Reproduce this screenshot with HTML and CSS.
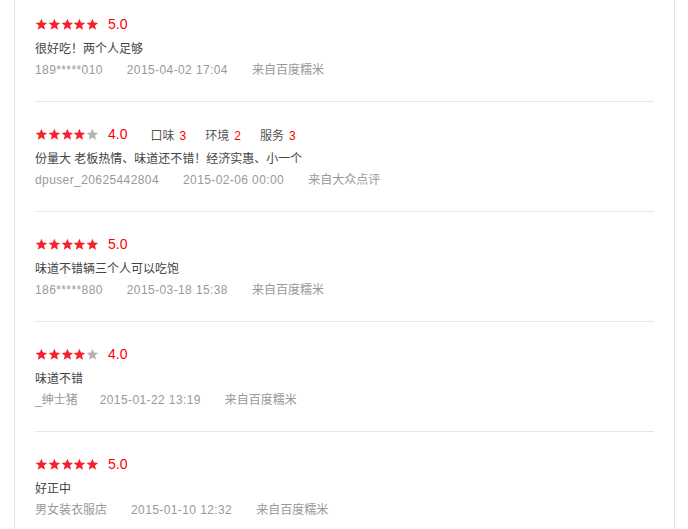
FILE: index.html
```html
<!DOCTYPE html>
<html lang="zh-CN">
<head>
    <meta charset="UTF-8">
    <title>评论列表</title>
    <link rel="stylesheet" href="styles.css">
</head>
<body>
    <svg width="0" height="0" class="defs">
        <defs>
            <path id="star" d="M6.5 0.6 L8.1 4.6 L12.4 4.9 L9.1 7.6 L10.2 11.8 L6.5 9.5 L2.8 11.8 L3.9 7.6 L0.6 4.9 L4.9 4.6 Z"/>
        </defs>
    </svg>

    <div class="review-list">
        <div class="review">
            <div class="review-head">
                <span class="stars" data-score="5"></span>
                <span class="score">5.0</span>
            </div>
            <p class="review-text">很好吃！两个人足够</p>
            <div class="review-meta">
                <span class="latin">189*****010</span>
                <span class="latin">2015-04-02 17:04</span>
                <span>来自百度糯米</span>
            </div>
        </div>

        <div class="review">
            <div class="review-head">
                <span class="stars" data-score="4"></span>
                <span class="score">4.0</span>
                <span class="sub-scores">
                    <span class="sub">口味<em>3</em></span>
                    <span class="sub">环境<em>2</em></span>
                    <span class="sub">服务<em>3</em></span>
                </span>
            </div>
            <p class="review-text">份量大 老板热情、味道还不错！经济实惠、小一个</p>
            <div class="review-meta">
                <span class="latin">dpuser_20625442804</span>
                <span class="latin">2015-02-06 00:00</span>
                <span>来自大众点评</span>
            </div>
        </div>

        <div class="review">
            <div class="review-head">
                <span class="stars" data-score="5"></span>
                <span class="score">5.0</span>
            </div>
            <p class="review-text">味道不错辆三个人可以吃饱</p>
            <div class="review-meta">
                <span class="latin">186*****880</span>
                <span class="latin">2015-03-18 15:38</span>
                <span>来自百度糯米</span>
            </div>
        </div>

        <div class="review">
            <div class="review-head">
                <span class="stars" data-score="4"></span>
                <span class="score">4.0</span>
            </div>
            <p class="review-text">味道不错</p>
            <div class="review-meta">
                <span class="narrow">_绅士猪</span>
                <span class="latin">2015-01-22 13:19</span>
                <span>来自百度糯米</span>
            </div>
        </div>

        <div class="review">
            <div class="review-head">
                <span class="stars" data-score="5"></span>
                <span class="score">5.0</span>
            </div>
            <p class="review-text">好正中</p>
            <div class="review-meta">
                <span>男女装衣服店</span>
                <span class="latin">2015-01-10 12:32</span>
                <span>来自百度糯米</span>
            </div>
        </div>
    </div>

    <script>
        document.querySelectorAll('.stars').forEach(el => {
            const score = parseInt(el.dataset.score, 10);
            let html = '';
            for (let i = 0; i < 5; i++) {
                const cls = i < score ? 'on' : 'off';
                html += `<svg class="star ${cls}" width="13" height="12" viewBox="0 0 13 12"><use href="#star"/></svg>`;
            }
            el.innerHTML = html;
        });
    </script>
</body>
</html>
```

FILE: styles.css
```css
body {
    margin: 0;
    padding: 0;
    background: #fff;
    font-family: "Liberation Sans", "Noto Sans CJK SC", sans-serif;
    font-size: 12px;
    color: #333;
    overflow: hidden;
}

.defs {
    position: absolute;
}

.review-list {
    width: 619px;
    margin-left: 14px;
    padding: 0 20px;
    border-left: 1px solid #e3e3e3;
    border-right: 1px solid #e3e3e3;
    min-height: 529px;
}

.review {
    padding: 20px 0 21px;
    border-bottom: 1px solid #e6e6e6;
}

.review:first-child {
    padding-top: 12px;
}

.review-head {
    display: flex;
    align-items: center;
    height: 24px;
}

.stars {
    display: flex;
    width: 64px;
}

.star {
    display: block;
    width: 13px;
    height: 12px;
}

.star.on {
    fill: #f5212d;
}

.star.off {
    fill: #b3b3b3;
}

.score {
    margin-left: 9px;
    font-size: 14px;
    color: #f00;
}

.sub-scores {
    display: flex;
    margin-left: 23px;
    gap: 19px;
}

.sub {
    color: #555;
}

.sub em {
    font-style: normal;
    color: #f00;
    margin-left: 5px;
}

.review-text {
    margin: 1px 0 0;
    line-height: 24px;
    color: #444;
}

.review-meta {
    display: flex;
    gap: 24px;
    margin-top: -1px;
    line-height: 20px;
    color: #999;
}

.review-meta .latin {
    letter-spacing: 0.4px;
}

.review-meta .narrow {
    margin-right: -2px;
}
```
